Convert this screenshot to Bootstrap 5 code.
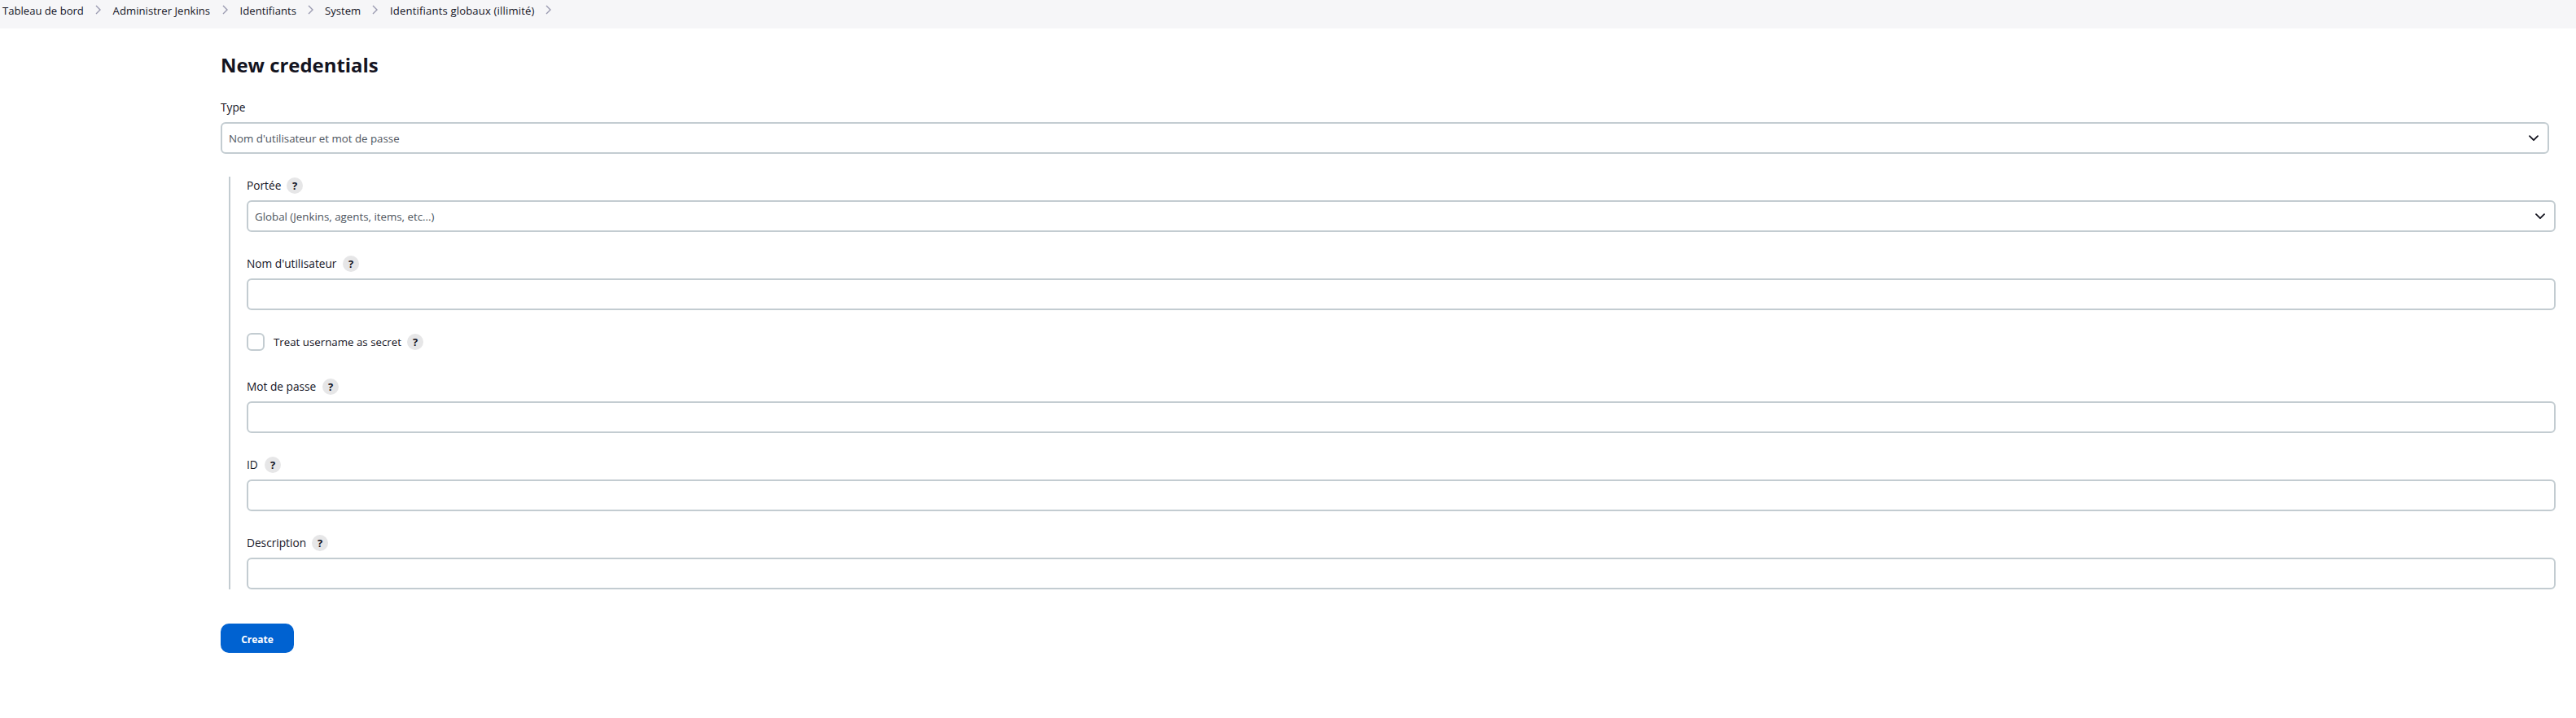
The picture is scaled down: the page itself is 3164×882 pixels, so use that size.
<!DOCTYPE html>
<html lang="fr">
<head>
<meta charset="utf-8">
<title>New credentials [Jenkins]</title>
<link rel="stylesheet" href="https://cdn.jsdelivr.net/npm/bootstrap@5.3.0/dist/css/bootstrap.min.css">
<style>
body{font-family:"Open Sans","Noto Sans",sans-serif;font-size:14px;line-height:20px;color:#14141f;background:#fff}
.crumbs{height:35px;background:#f6f6f8;padding-left:3px;padding-top:3px}
.crumbs a{color:#14141f;text-decoration:none;font-size:13.1px;font-weight:500;white-space:nowrap;flex:none}
.crumbs svg{width:8px;height:12px;margin:3px 13px 0 15px;flex:none}
.w-dash{width:99px}.w-admin{width:120px}.w-ident{width:69px}.w-system{width:43px}.w-global{width:177px}
.crumbs .w-global{letter-spacing:.16px;padding-left:1px}
.crumbs .w-admin,.crumbs .w-ident{padding-left:.6px;letter-spacing:.04px}
main{padding:0 33px 0 271px}
h1.title{font-size:23.9px;line-height:30px;font-weight:700;margin:30px 0 27px}
.lbl{height:20px;font-weight:500;font-size:13.7px;margin-bottom:8px;white-space:nowrap}
.field-box.form-control,.field-box.form-select{height:39px;border:2px solid #c3ccd1;border-radius:6px;padding:1px 8px 0;font-size:13.3px;line-height:34px;color:#4d545d;background-color:#fff}
.field-box.form-select{background-image:url("data:image/svg+xml,%3Csvg xmlns='http://www.w3.org/2000/svg' viewBox='0 0 12 8'%3E%3Cpath fill='none' stroke='%2314141f' stroke-width='1.8' stroke-linecap='round' stroke-linejoin='round' d='M1 1.2l5 5 5-5'/%3E%3C/svg%3E");background-size:12px 8px;background-position:right 11px top 14px}
.sub{margin:28px -8px 0 10px;border-left:2px solid #c3ccd1;padding:1px 0 0 20px}
.field{margin-bottom:29px}
.field:last-child{margin-bottom:0}
.help{width:20px;height:20px;border-radius:50%;background:#e6e6e7;font-size:13px;font-weight:700;display:inline-flex;align-items:center;justify-content:center;flex:none;margin-left:8px}
.w-scope{width:41px}.w-user{width:110px}.w-pass{width:85px}.w-id{width:14px}.w-desc{width:72px}.w-secret{width:156px;font-weight:500;font-size:13.3px;white-space:nowrap}
.secret-row.form-check{margin:-1px 0 34px;min-height:0;height:22px}
.secret.form-check-input{width:22px;height:22px;margin:0 11px 0 0;border:2px solid #c3ccd1;border-radius:6px;flex:none}
.create.btn{width:90px;height:36px;border:0;border-radius:10px;background:#0062d1;color:#fff;font-weight:700;font-size:12px;margin-top:42px;padding:3px 0 0;line-height:20px}
</style>
</head>
<body>
<nav class="crumbs d-flex align-items-start">
<a class="w-dash" href="#">Tableau de bord</a><svg viewBox="0 0 8 12"><path d="M1 1l5 5-5 5" fill="none" stroke="#9a9ab0" stroke-width="1.4"/></svg>
<a class="w-admin" href="#">Administrer Jenkins</a><svg viewBox="0 0 8 12"><path d="M1 1l5 5-5 5" fill="none" stroke="#9a9ab0" stroke-width="1.4"/></svg>
<a class="w-ident" href="#">Identifiants</a><svg viewBox="0 0 8 12"><path d="M1 1l5 5-5 5" fill="none" stroke="#9a9ab0" stroke-width="1.4"/></svg>
<a class="w-system" href="#">System</a><svg viewBox="0 0 8 12"><path d="M1 1l5 5-5 5" fill="none" stroke="#9a9ab0" stroke-width="1.4"/></svg>
<a class="w-global" href="#">Identifiants globaux (illimité)</a><svg viewBox="0 0 8 12"><path d="M1 1l5 5-5 5" fill="none" stroke="#9a9ab0" stroke-width="1.4"/></svg>
</nav>
<main>
<h1 class="title">New credentials</h1>
<div class="lbl">Type</div>
<select class="form-select field-box"><option>Nom d'utilisateur et mot de passe</option></select>
<div class="sub">
<div class="field"><div class="lbl d-flex align-items-center"><span class="w-scope">Portée</span><span class="help">?</span></div><select class="form-select field-box"><option>Global (Jenkins, agents, items, etc...)</option></select></div>
<div class="field"><div class="lbl d-flex align-items-center"><span class="w-user">Nom d'utilisateur</span><span class="help">?</span></div><input type="text" class="form-control field-box"></div>
<div class="secret-row form-check d-flex align-items-center p-0"><input type="checkbox" class="form-check-input secret"><span class="w-secret">Treat username as secret</span><span class="help">?</span></div>
<div class="field"><div class="lbl d-flex align-items-center"><span class="w-pass">Mot de passe</span><span class="help">?</span></div><input type="password" class="form-control field-box"></div>
<div class="field"><div class="lbl d-flex align-items-center"><span class="w-id">ID</span><span class="help">?</span></div><input type="text" class="form-control field-box"></div>
<div class="field"><div class="lbl d-flex align-items-center"><span class="w-desc">Description</span><span class="help">?</span></div><input type="text" class="form-control field-box"></div>
</div>
<button type="button" class="btn create">Create</button>
</main>
<script src="https://cdn.jsdelivr.net/npm/bootstrap@5.3.0/dist/js/bootstrap.bundle.min.js"></script>
</body>
</html>
